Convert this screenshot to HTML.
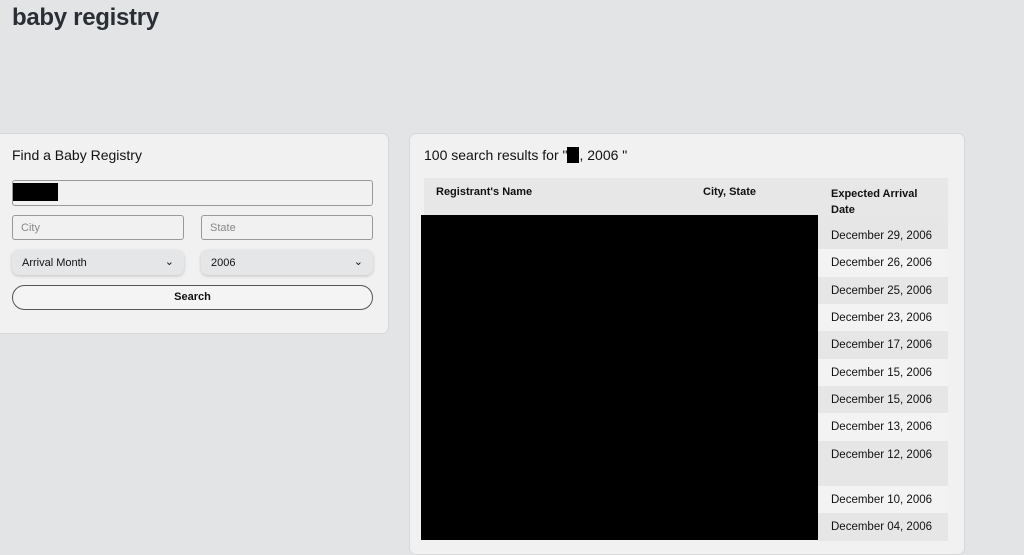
<html><head><style>
body{margin:0;width:1024px;height:544px;overflow:hidden;background:#e3e4e6;font-family:"Liberation Sans",sans-serif;color:#111;position:relative}
.a{position:absolute}
h1{position:absolute;left:12px;top:4px;margin:0;font-size:24px;font-weight:bold;color:#2a2f36;letter-spacing:-0.3px}
.card{position:absolute;background:#f1f1f1;border-radius:7px;border:1px solid #d8d8d8}
.inp{position:absolute;border:1px solid #999;border-radius:3px;background:#f1f1f1;box-sizing:border-box;font-size:11px;color:#888;padding:6px 8px}
.sel{position:absolute;background:#e5e6e8;border-radius:7px;box-shadow:0 1px 3px rgba(0,0,0,.2);font-size:11px;padding:7px 10px;box-sizing:border-box}
.row{position:absolute;left:818px;width:130px;font-size:11.5px;padding:8px 13px;box-sizing:border-box;white-space:nowrap}
</style></head><body>
<h1>baby registry</h1>
<div class="card" style="left:-8px;top:133px;width:395px;height:199px"></div>
<div class="a" style="left:12px;top:147px;font-size:14px">Find a Baby Registry</div>
<div class="inp" style="left:12px;top:180px;width:361px;height:26px"></div>
<div class="a" style="left:13px;top:183px;width:45px;height:18px;background:#000"></div>
<div class="inp" style="left:12px;top:215px;width:172px;height:25px">City</div>
<div class="inp" style="left:201px;top:215px;width:172px;height:25px">State</div>
<div class="sel" style="left:12px;top:250px;width:172px;height:25px">Arrival Month<span style="position:absolute;right:10px;top:5px">⌄</span></div>
<div class="sel" style="left:201px;top:250px;width:172px;height:25px">2006<span style="position:absolute;right:10px;top:5px">⌄</span></div>
<div class="a" style="left:12px;top:285px;width:361px;height:25px;border:1px solid #555;border-radius:13px;box-sizing:border-box;text-align:center;font-size:11px;font-weight:bold;line-height:23px;background:#f4f4f4">Search</div>
<div class="card" style="left:409px;top:133px;width:554px;height:420px"></div>
<div class="a" style="left:424px;top:147px;font-size:14px">100 search results for "<span style="display:inline-block;width:12px;height:16px;background:#000;vertical-align:-3px"></span>, 2006 "</div>
<div class="a" style="left:424px;top:178px;width:524px;height:44px;background:#e7e7e7"></div>
<div class="a" style="left:436px;top:186px;font-size:11px;font-weight:bold">Registrant's Name</div>
<div class="a" style="left:703px;top:186px;font-size:11px;font-weight:bold">City, State</div>
<div class="a" style="left:831px;top:186px;font-size:11px;font-weight:bold;line-height:16px">Expected Arrival<br>Date</div>
<div class="row" style="top:222px;height:27px;background:#e6e6e6">December 29, 2006</div>
<div class="row" style="top:249px;height:28px;background:#f3f3f3">December 26, 2006</div>
<div class="row" style="top:277px;height:27px;background:#e6e6e6">December 25, 2006</div>
<div class="row" style="top:304px;height:27px;background:#f3f3f3">December 23, 2006</div>
<div class="row" style="top:331px;height:28px;background:#e6e6e6">December 17, 2006</div>
<div class="row" style="top:359px;height:27px;background:#f3f3f3">December 15, 2006</div>
<div class="row" style="top:386px;height:27px;background:#e6e6e6">December 15, 2006</div>
<div class="row" style="top:413px;height:28px;background:#f3f3f3">December 13, 2006</div>
<div class="row" style="top:441px;height:45px;background:#e6e6e6">December 12, 2006</div>
<div class="row" style="top:486px;height:27px;background:#f3f3f3">December 10, 2006</div>
<div class="row" style="top:513px;height:28px;background:#e6e6e6">December 04, 2006</div>
<div class="a" style="left:421px;top:215px;width:397px;height:325px;background:#000"></div>
</body></html>
